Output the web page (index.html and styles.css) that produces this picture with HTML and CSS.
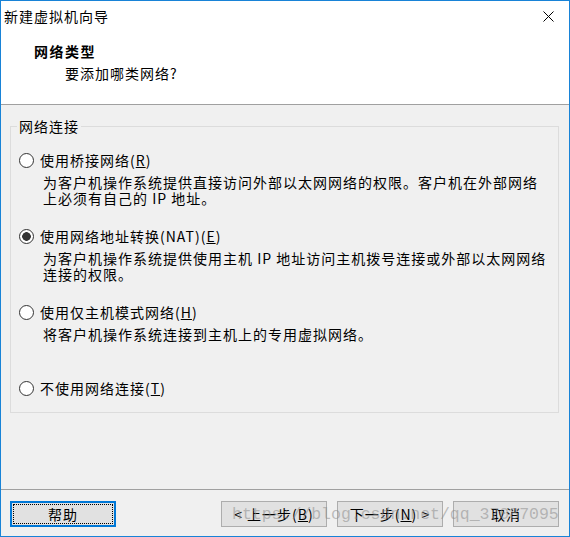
FILE: index.html
```html
<!DOCTYPE html>
<html lang="zh-CN">
<head>
    <meta charset="UTF-8">
    <title>新建虚拟机向导</title>
    <link rel="stylesheet" href="styles.css">
</head>
<body>

<div class="window">
    <div class="top">
        <div class="titlebar">
            <span class="title">新建虚拟机向导</span>
            <svg class="close" width="11" height="11" viewBox="0 0 11 11">
                <path d="M0.5 0.5 L10.5 10.5 M10.5 0.5 L0.5 10.5" stroke="#000" stroke-width="1" fill="none"/>
            </svg>
        </div>
        <div class="heading">网络类型</div>
        <div class="subheading">要添加哪类网络?</div>
    </div>

    <div class="content">
        <fieldset class="group">
            <legend>网络连接</legend>

            <div class="option">
                <div class="option-row"><span class="radio"></span>使用桥接网络(<u>R</u>)</div>
                <div class="option-desc">为客户机操作系统提供直接访问外部以太网网络的权限。客户机在外部网络<br>上必须有自己的 IP 地址。</div>
            </div>

            <div class="option">
                <div class="option-row"><span class="radio checked"></span>使用网络地址转换(NAT)(<u>E</u>)</div>
                <div class="option-desc">为客户机操作系统提供使用主机 IP 地址访问主机拨号连接或外部以太网网络<br>连接的权限。</div>
            </div>

            <div class="option">
                <div class="option-row"><span class="radio"></span>使用仅主机模式网络(<u>H</u>)</div>
                <div class="option-desc">将客户机操作系统连接到主机上的专用虚拟网络。</div>
            </div>

            <div class="option last">
                <div class="option-row"><span class="radio"></span>不使用网络连接(<u>T</u>)</div>
            </div>
        </fieldset>
    </div>

    <div class="footer">
        <button type="button" class="btn btn-focus">帮助</button>
        <div class="nav">
            <button type="button" class="btn">&lt; 上一步(<u>B</u>)</button>
            <button type="button" class="btn">下一步(<u>N</u>) &gt;</button>
            <button type="button" class="btn">取消</button>
        </div>
        <div class="watermark">https://blog.csdn.net/qq_37087095</div>
    </div>
</div>

</body>
</html>
```

FILE: styles.css
```css
body {
    margin: 0;
    padding: 0;
    background-color: #fff;
    font-family: "Noto Sans CJK SC", "Noto Sans", sans-serif;
    font-size: 14px;
    color: #000;
}

.window {
    width: 570px;
    height: 537px;
    box-sizing: border-box;
    border: 1px solid #1883d7;
    background-color: #f0f0f0;
    display: flex;
    flex-direction: column;
}

/* header */

.top {
    height: 103px;
    background-color: #fff;
    border-bottom: 1px solid #a0a0a0;
}

.titlebar {
    height: 31px;
    display: flex;
    align-items: center;
    justify-content: space-between;
    padding: 0 15px 0 3px;
}

.title {
    letter-spacing: 1px;
    line-height: 31px;
}

.close {
    display: block;
}

.heading {
    margin-top: 9px;
    padding-left: 33px;
    font-weight: bold;
    letter-spacing: 1.5px;
    line-height: 20px;
}

.subheading {
    margin-top: 2px;
    padding-left: 64px;
    letter-spacing: 1px;
    line-height: 20px;
}

/* options */

.content {
    flex: 1;
}

.group {
    margin: 13px 10px 0 9px;
    padding: 16px 8px 14px 8px;
    border: 1px solid #dcdcdc;
}

.group legend {
    padding: 0 2px;
    margin-left: -2px;
    line-height: 16px;
    letter-spacing: 1px;
}

.option {
    margin-bottom: 20px;
}

.option.last {
    margin-bottom: 0;
}

.option-row {
    display: flex;
    align-items: center;
    height: 20px;
    letter-spacing: 1px;
    white-space: nowrap;
}

.radio {
    width: 15px;
    height: 15px;
    box-sizing: border-box;
    border: 1px solid #333;
    border-radius: 50%;
    background-color: #fff;
    margin-right: 6px;
    flex-shrink: 0;
}

.radio.checked {
    background: radial-gradient(circle, #333 0, #333 4px, #fff 4.6px);
}

.option-desc {
    margin: 4px 0 0 24px;
    min-height: 32px;
    line-height: 16px;
    letter-spacing: 1px;
    white-space: nowrap;
}

/* buttons */

.footer {
    position: relative;
    height: 47px;
    box-sizing: border-box;
    border-top: 1px solid #a0a0a0;
    padding: 11px 10px 0 9px;
    display: flex;
    justify-content: space-between;
    align-items: flex-start;
}

.nav {
    display: flex;
    gap: 10px;
}

.btn {
    position: relative;
    width: 106px;
    height: 26px;
    padding: 0;
    box-sizing: border-box;
    border: 1px solid #adadad;
    background-color: #e1e1e1;
    font-family: inherit;
    font-size: 14px;
    letter-spacing: 1px;
    color: #000;
}

.btn-focus {
    border: 2px solid #0078d7;
}

.btn-focus::after {
    content: "";
    position: absolute;
    top: 1px;
    left: 1px;
    right: 1px;
    bottom: 1px;
    border: 1px dotted #000;
}

.watermark {
    position: absolute;
    left: 231px;
    top: 15px;
    font-family: "Liberation Mono", monospace;
    font-size: 16.5px;
    line-height: 20px;
    color: rgba(140, 140, 140, 0.55);
    white-space: nowrap;
    pointer-events: none;
}
```
